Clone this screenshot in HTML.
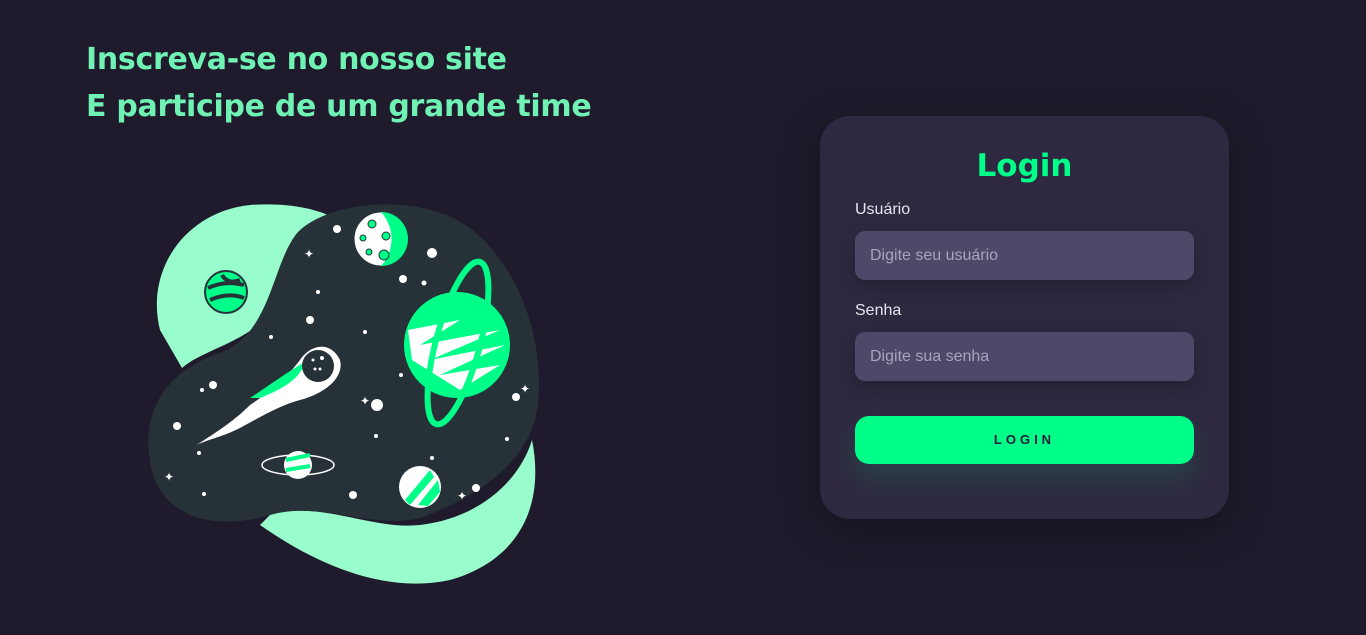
<!DOCTYPE html>
<html><head><meta charset="utf-8"><style>
*{margin:0;padding:0;box-sizing:border-box}
body{width:1366px;height:635px;background:#1f1b2c;position:relative;overflow:hidden;font-family:"Liberation Sans",sans-serif}
h1{position:absolute;left:86px;top:36px;color:#6ff2b3;font:bold 30px/47px "DejaVu Sans","Liberation Sans",sans-serif;letter-spacing:-0.3px}
.card{position:absolute;left:820px;top:116px;width:409px;height:403px;border-radius:30px;background:#2e2941;box-shadow:0 10px 40px rgba(0,0,0,.35)}
.card h2{position:absolute;left:0;right:0;top:148px;text-align:center;color:#00ff88;font:bold 31px "DejaVu Sans",sans-serif}
.lbl{position:absolute;left:855px;color:#e6e4ee;font-size:16px}
.in{position:absolute;left:855px;width:339px;height:49px;border-radius:10px;background:#504869;color:#a9a3bd;font-size:16px;line-height:49px;padding-left:15px;box-shadow:0 6px 16px rgba(0,0,0,.25)}
.btn{position:absolute;left:855px;top:416px;width:339px;height:48px;border-radius:14px;background:#00ff88;color:#231b3c;font-weight:bold;font-size:13px;letter-spacing:4px;text-align:center;line-height:48px;box-shadow:0 14px 28px rgba(0,255,136,.12)}
</style></head><body>
<h1>Inscreva-se no nosso site<br>E participe de um grande time</h1>
<svg width="1366" height="635" style="position:absolute;left:0;top:0">
<path fill="#98fccc" d="M160 330C145 270 185 212 250 205C290 202 318 210 330 216C300 245 290 295 262 322C235 345 200 352 182 368Z"/>
<path fill="#98fccc" d="M270 515C320 500 370 530 420 525C480 518 520 480 532 440C545 505 520 560 450 580C380 595 310 560 260 525Z"/>
<path fill="#263238" d="M298 232C330 200 420 192 470 228C530 275 548 365 535 420C520 470 470 500 420 518C370 530 320 500 270 515C220 530 160 522 150 462C140 402 175 368 222 352C272 332 272 262 298 232Z"/>
<g fill="#fff">
<circle cx="337" cy="229" r="4"/><circle cx="432" cy="253" r="5"/><circle cx="403" cy="279" r="4"/><circle cx="424" cy="283" r="2.5"/><circle cx="318" cy="292" r="2"/><circle cx="310" cy="320" r="4"/><circle cx="365" cy="332" r="2"/><circle cx="271" cy="337" r="2"/><circle cx="401" cy="375" r="2"/><circle cx="213" cy="385" r="4"/><circle cx="202" cy="390" r="2"/><circle cx="377" cy="405" r="6"/><circle cx="516" cy="397" r="4"/><circle cx="177" cy="426" r="4"/><circle cx="376" cy="436" r="2"/><circle cx="507" cy="439" r="2"/><circle cx="199" cy="453" r="2"/><circle cx="432" cy="458" r="2"/><circle cx="476" cy="488" r="4"/><circle cx="353" cy="495" r="4"/><circle cx="204" cy="494" r="2"/>
</g>
<circle cx="381" cy="239" r="27" fill="#fff" stroke="#263238"/><path d="M381 212A27 27 0 0 1 381 266A40 40 0 0 0 381 212Z" fill="#00ff88"/>
<g fill="#00ff88" stroke="#263238"><circle cx="372" cy="224" r="4"/><circle cx="386" cy="236" r="4"/><circle cx="384" cy="255" r="5"/><circle cx="369" cy="252" r="3"/><circle cx="363" cy="238" r="3"/></g>
<circle cx="226" cy="292" r="21" fill="#00ff88" stroke="#263238" stroke-width="2"/><path d="M208 288Q225 280 244 285M210 300Q228 292 244 298M222 275Q228 285 240 280" stroke="#263238" stroke-width="4" fill="none"/>
<circle cx="457" cy="345" r="53" fill="#00ff88"/><path d="M408 330L460 320L420 345L500 330L430 360L505 345L440 375L500 365L460 390L412 360Z" fill="#fff"/>
<ellipse cx="458" cy="343" rx="22" ry="84" transform="rotate(15 458 343)" fill="none" stroke="#00ff88" stroke-width="6"/>
<circle cx="420" cy="487" r="21" fill="#fff"/><path d="M405 500L430 470L434 477L410 505ZM418 505L438 480L440 492L428 506Z" fill="#00ff88"/>
<ellipse cx="298" cy="465" rx="36" ry="10" fill="none" stroke="#fff" stroke-width="1.5"/><circle cx="298" cy="465" r="14" fill="#fff"/><path d="M286 460L310 455M286 470L310 466" stroke="#00ff88" stroke-width="4"/>
<path d="M195 446C220 430 235 420 250 405C265 395 285 380 300 360C310 345 330 340 340 360C345 380 320 395 300 400C280 405 255 420 240 428C220 438 205 440 195 446Z" fill="#fff"/>
<path d="M250 398C270 385 290 370 305 362C300 380 280 390 260 398Z" fill="#00ff88"/>
<circle cx="318" cy="366" r="16" fill="#263238"/><g fill="#fff"><circle cx="313" cy="360" r="1.5"/><circle cx="322" cy="358" r="2"/><circle cx="315" cy="369" r="1.5"/><circle cx="320" cy="369" r="1.5"/></g>
<g fill="#fff" font-size="12"><text x="304" y="258">✦</text><text x="360" y="405">✦</text><text x="520" y="393">✦</text><text x="164" y="481">✦</text><text x="457" y="500">✦</text></g>
</svg>
<div class="card"></div>
<div style="position:absolute;left:820px;width:409px;top:148px;text-align:center;color:#00ff88;font:bold 31px 'DejaVu Sans',sans-serif">Login</div>
<div class="lbl" style="top:201px">Usuário</div>
<div class="in" style="top:231px">Digite seu usuário</div>
<div class="lbl" style="top:302px">Senha</div>
<div class="in" style="top:332px">Digite sua senha</div>
<div class="btn">LOGIN</div>
</body></html>
